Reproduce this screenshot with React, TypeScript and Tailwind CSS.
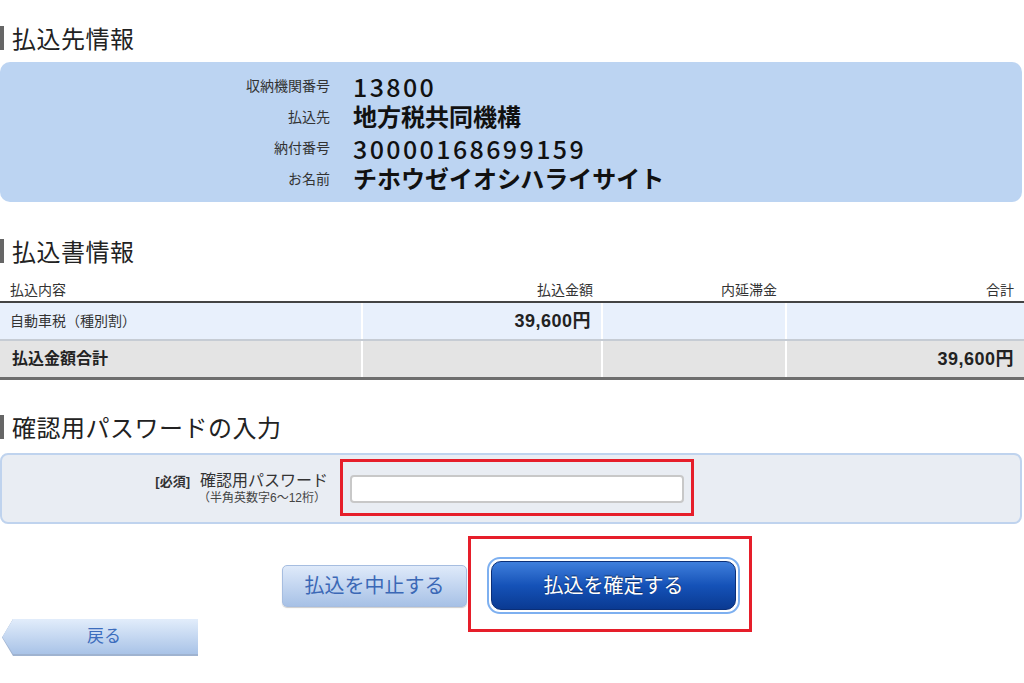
import React from 'react'

const font = "font-['Liberation_Sans','Noto_Sans_CJK_JP',sans-serif]"

function Heading({ children, className = '' }: { children: React.ReactNode; className?: string }) {
  return (
    <h2 className={`flex items-center h-[26px] ${className}`}>
      <span className="w-[4px] h-[24px] bg-[#666]" />
      <span className="ml-[8px] text-[24px] leading-[26px] text-[#222] font-['Noto_Sans_CJK_JP',sans-serif] font-normal tracking-[0.5px]">
        {children}
      </span>
    </h2>
  )
}

const payee = [
  { label: '収納機関番号', value: '13800', num: true },
  { label: '払込先', value: '地方税共同機構' },
  { label: '納付番号', value: '30000168699159', num: true },
  { label: 'お名前', value: 'チホウゼイオシハライサイト' },
]

export default function App() {
  return (
    <div className={`w-[1024px] h-[683px] bg-white overflow-hidden text-[#222] ${font}`}>
      <Heading className="pt-[25px] h-[51px]">払込先情報</Heading>

      {/* payee info */}
      <div className="mt-[11px] mr-[2px] h-[140px] rounded-[10px] bg-[#bcd4f2] pt-[9px]">
        {payee.map((row) => (
          <div key={row.label} className="grid grid-cols-[330px_1fr] gap-[23px] h-[31px] items-center">
            <span className="text-right text-[14px] text-[#333]">{row.label}</span>
            <span
              className={`leading-none text-[#111] ${
                row.num
                  ? "text-[25px] tracking-[2.4px] font-['Noto_Sans_CJK_JP',sans-serif] font-medium"
                  : 'text-[24px] font-bold'
              }`}
            >
              {row.value}
            </span>
          </div>
        ))}
      </div>

      <Heading className="mt-[36px]">払込書情報</Heading>

      {/* table */}
      <div className="mt-[16px] text-[14px]">
        <div className="grid grid-cols-[363px_240px_184px_1fr] h-[23px] items-center text-[#333] border-b-2 border-[#444]">
          <span className="pl-[10px]">払込内容</span>
          <span className="text-right pr-[10px]">払込金額</span>
          <span className="text-right pr-[10px]">内延滞金</span>
          <span className="text-right pr-[10px]">合計</span>
        </div>
        <div className="grid grid-cols-[363px_240px_184px_1fr] h-[38px] bg-[#e8f0fc] border-b-2 border-[#c6ccd4]">
          <span className="flex items-center pl-[10px] text-[14px] text-[#333] border-r-2 border-white">自動車税（種別割）</span>
          <span className="flex items-center justify-end pr-[10px] text-[18px] font-bold tracking-[0.5px] border-r-2 border-white">
            39,600円
          </span>
          <span className="border-r-2 border-white" />
          <span />
        </div>
        <div className="grid grid-cols-[363px_240px_184px_1fr] h-[39px] bg-[#e4e4e4] border-b-[3px] border-[#6e6e6e]">
          <span className="flex items-center pl-[12px] text-[16px] font-bold border-r-2 border-white">払込金額合計</span>
          <span className="border-r-2 border-white" />
          <span className="border-r-2 border-white" />
          <span className="flex items-center justify-end pr-[10px] text-[18px] font-bold tracking-[0.5px]">39,600円</span>
        </div>
      </div>

      <Heading className="mt-[34px]">確認用パスワードの入力</Heading>

      {/* password */}
      <div className="mt-[13px] mr-[2px] h-[71px] rounded-[8px] border-2 border-[#bfd3ee] bg-[#e9edf3] flex items-center">
        <div className="w-[326px] text-right leading-tight">
          <div className="flex items-baseline justify-end">
            <span className="text-[13px] font-bold text-[#333]">[必須]</span>
            <span className="ml-[10px] text-[16px] text-[#333]">確認用パスワード</span>
          </div>
          <div className="text-[12px] text-[#444] pr-[2px]">（半角英数字6〜12桁）</div>
        </div>
        <div className="relative ml-[22px]">
          <input
            type="password"
            className="block w-[334px] h-[28px] rounded-[4px] border-2 border-[#c8c8c8] bg-white outline-none"
          />
          <div className="absolute -left-[10px] -top-[16px] w-[354px] h-[57px] border-[3px] border-[#e61e2a] pointer-events-none" />
        </div>
      </div>

      {/* buttons */}
      <div className="mt-[33px] flex items-center pl-[282px]">
        <button className="w-[185px] h-[42px] rounded-[5px] border border-[#a6bde0] bg-gradient-to-b from-[#dfeafa] to-[#a7c1e6] text-[20px] text-[#3b68b6] shadow-[0_1px_1px_rgba(0,0,0,0.2)]">
          払込を中止する
        </button>
        <div className="relative ml-[20px]">
          <div className="w-[253px] h-[57px] rounded-[13px] border-2 border-[#7eb0f0] bg-white p-[2px]">
            <button className="w-full h-full rounded-[10px] border border-[#0b2f78] bg-gradient-to-b from-[#3f7fdc] via-[#1552b8] to-[#0a3a92] text-[20px] text-white [text-shadow:0_-1px_1px_rgba(0,0,0,0.5)]">
              払込を確定する
            </button>
          </div>
          <div className="absolute -left-[19px] -top-[21px] w-[284px] h-[96px] border-[3px] border-[#e61e2a] pointer-events-none" />
        </div>
      </div>

      {/* back */}
      <div className="mt-[5px] ml-[2px] w-[196px] h-[37px] bg-[#9fb3d0] [clip-path:polygon(11px_0,100%_0,100%_100%,11px_100%,0_50%)]">
        <button className="w-full h-[35px] bg-gradient-to-b from-[#e2edfb] to-[#a9c3e7] [clip-path:polygon(11px_0,100%_0,100%_100%,11px_100%,0_50%)] text-[17px] text-[#3d6dbd] pl-[8px]">
          戻る
        </button>
      </div>
    </div>
  )
}
